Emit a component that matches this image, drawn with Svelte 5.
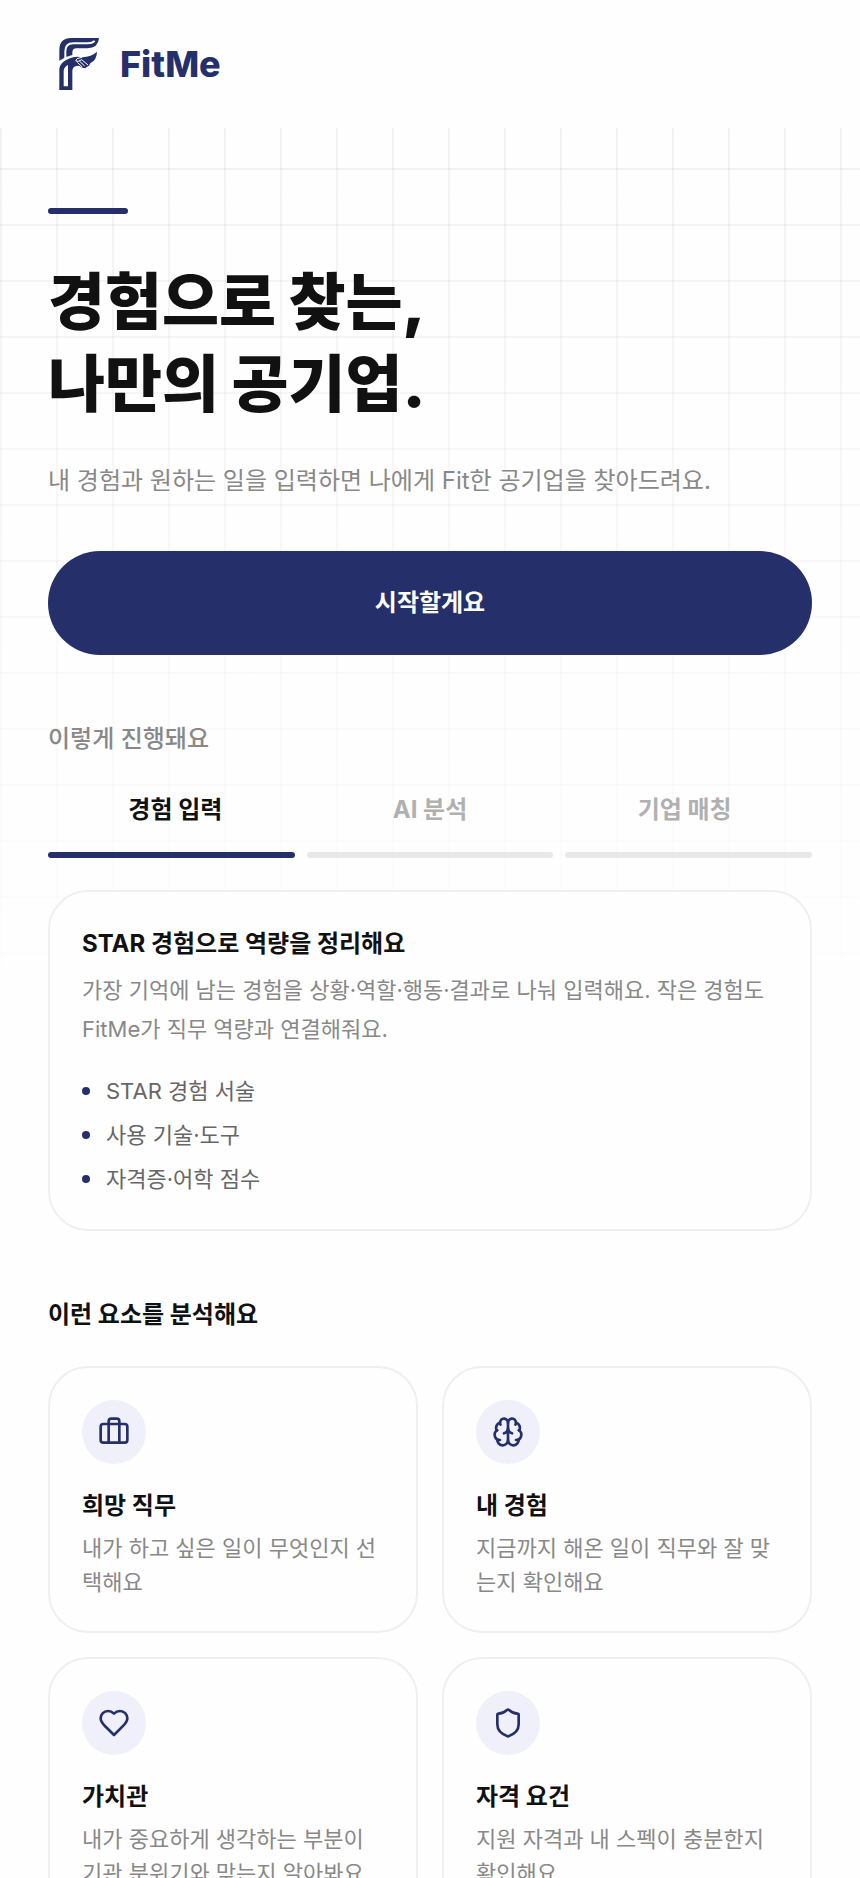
<script>
  const steps = [
    {
      tab: '경험 입력',
      title: 'STAR 경험으로 역량을 정리해요',
      text: '가장 기억에 남는 경험을 상황·역할·행동·결과로 나눠 입력해요. 작은 경험도 FitMe가 직무 역량과 연결해줘요.',
      points: ['STAR 경험 서술', '사용 기술·도구', '자격증·어학 점수'],
    },
    { tab: 'AI 분석' },
    { tab: '기업 매칭' },
  ];

  const factors = [
    {
      icon: 'briefcase',
      title: '희망 직무',
      text: '내가 하고 싶은 일이 무엇인지 선택해요',
    },
    {
      icon: 'brain',
      title: '내 경험',
      text: '지금까지 해온 일이 직무와 잘 맞는지 확인해요',
    },
    {
      icon: 'heart',
      title: '가치관',
      text: '내가 중요하게 생각하는 부분이 기관 분위기와 맞는지 알아봐요',
    },
    {
      icon: 'shield',
      title: '자격 요건',
      text: '지원 자격과 내 스펙이 충분한지 확인해요',
    },
  ];

  const current = steps[0];
</script>

<div class="page">
  <header>
    <a class="brand" href="#top">
      <svg class="logo" viewBox="54 36 192 192" aria-hidden="true">
        <path
          fill="#252f6a"
          d="M88 122V90Q88 54 124 54H207Q205 84 172 85H139Q127 85 127 98V105Q104 110 88 122Z"
        />
        <path
          fill="none"
          stroke="#fff"
          stroke-width="6"
          d="M106 117V94Q106 70 130 70H174Q186 70 194 63"
        />
        <path
          fill="#252f6a"
          d="M88 210V146Q91 126 116 116Q137 107 156 112Q185 110 201 95Q201 119 181 130L177 137L171 140L166 145L157 143L147 137Q127 137 127 153V210Z"
        />
        <path fill="#fff" d="M101 199V152Q102 141 114 135V199Z" />
        <path
          fill="none"
          stroke="#fff"
          stroke-width="3"
          stroke-linecap="round"
          stroke-linejoin="round"
          d="M156 112L141 116L137 123Q144 127 155 119L173 134M149 124L163 137M143 128L156 140"
        />
      </svg>
      <span>FitMe</span>
    </a>
  </header>

  <main id="top">
    <div class="accent"></div>
    <h1>경험으로 찾는,<br />나만의 공기업.</h1>
    <p class="lead">내 경험과 원하는 일을 입력하면 나에게 Fit한 공기업을 찾아드려요.</p>
    <button class="start" type="button">시작할게요</button>

    <section>
      <h2 class="muted">이렇게 진행돼요</h2>
      <div class="tabs" role="tablist">
        {#each steps as step, i}
          <button type="button" role="tab" aria-selected={i === 0} class:active={i === 0}>
            {step.tab}
          </button>
        {/each}
      </div>
      <div class="bars">
        {#each steps as _, i}
          <span class:active={i === 0}></span>
        {/each}
      </div>
      <article class="card">
        <h3>{current.title}</h3>
        <p class="detail">{current.text}</p>
        <ul>
          {#each current.points as point}
            <li>{point}</li>
          {/each}
        </ul>
      </article>
    </section>

    <section>
      <h2>이런 요소를 분석해요</h2>
      <div class="factors">
        {#each factors as factor}
          <article class="card">
            <div class="badge">
              <svg viewBox="0 0 24 24" aria-hidden="true">
                {#if factor.icon === 'briefcase'}
                  <path d="M16 20V4a2 2 0 0 0-2-2h-4a2 2 0 0 0-2 2v16" />
                  <rect width="20" height="14" x="2" y="6" rx="2" />
                {:else if factor.icon === 'brain'}
                  <path d="M12 18V5" />
                  <path d="M15 13a4.17 4.17 0 0 1-3-4 4.17 4.17 0 0 1-3 4" />
                  <path d="M17.598 6.5A3 3 0 1 0 12 5a3 3 0 1 0-5.598 1.5" />
                  <path d="M17.997 5.125a4 4 0 0 1 2.526 5.77" />
                  <path d="M18 18a4 4 0 0 0 2-7.464" />
                  <path d="M19.967 17.483A4 4 0 1 1 12 18a4 4 0 1 1-7.967-.517" />
                  <path d="M6 18a4 4 0 0 1-2-7.464" />
                  <path d="M6.003 5.125a4 4 0 0 0-2.526 5.77" />
                {:else if factor.icon === 'heart'}
                  <path
                    d="M19 14c1.49-1.46 3-3.21 3-5.5A5.5 5.5 0 0 0 16.5 3c-1.76 0-3 .5-4.5 2-1.5-1.5-2.74-2-4.5-2A5.5 5.5 0 0 0 2 8.5c0 2.3 1.5 4.05 3 5.5l7 7Z"
                  />
                {:else}
                  <path
                    d="M20 13c0 5-3.5 7.5-7.66 8.95a1 1 0 0 1-.67-.01C7.5 20.5 4 18 4 13V6a1 1 0 0 1 1-1c2 0 4.5-1.2 6.24-2.72a1.17 1.17 0 0 1 1.52 0C14.51 3.81 17 5 19 5a1 1 0 0 1 1 1z"
                  />
                {/if}
              </svg>
            </div>
            <h3>{factor.title}</h3>
            <p>{factor.text}</p>
          </article>
        {/each}
      </div>
    </section>
  </main>
</div>

<style>
  :global(body) {
    margin: 0;
    background: #fefefe;
  }

  .page {
    --navy: #252f6a;
    --ink: #111;
    --gray: #888;
    --grid: rgba(17, 17, 40, 0.06);
    height: 100vh;
    overflow: hidden;
    color: var(--ink);
    font-family: Inter, 'Noto Sans CJK KR', sans-serif;
    font-size: 24px;
    line-height: 40px;
    background:
      linear-gradient(to bottom, rgba(254, 254, 254, 0), #fefefe 1032px),
      linear-gradient(to right, var(--grid) 2px, transparent 2px) 0 0 / 56px 56px,
      linear-gradient(to bottom, var(--grid) 2px, transparent 2px) 0 0 / 56px 56px;
  }

  h1,
  h2,
  h3,
  p,
  ul {
    margin: 0;
    padding: 0;
  }

  button {
    border: 0;
    background: none;
    font: inherit;
    cursor: pointer;
  }

  header {
    padding: 32px 48px;
    background: #fefefe;
  }

  .brand {
    display: inline-flex;
    align-items: center;
    gap: 8px;
    color: var(--navy);
    font-size: 36px;
    font-weight: 800;
    text-decoration: none;
    vertical-align: top;
  }

  .logo {
    width: 64px;
    height: 64px;
  }

  main {
    padding: 80px 48px 64px;
  }

  .accent {
    width: 80px;
    height: 6px;
    border-radius: 3px;
    background: var(--navy);
  }

  h1 {
    margin-top: 48px;
    font-size: 62px;
    font-weight: 900;
    line-height: 82px;
  }

  .lead {
    margin-top: 35px;
    color: var(--gray);
  }

  .start {
    display: block;
    width: 100%;
    margin-top: 50px;
    padding: 32px;
    border-radius: 52px;
    background: var(--navy);
    color: #fff;
    font-weight: 700;
  }

  section {
    margin-top: 64px;
  }

  h2 {
    font-size: 24px;
    font-weight: 700;
  }

  h2.muted {
    color: var(--gray);
    font-weight: 500;
  }

  .tabs,
  .bars {
    display: grid;
    grid-template-columns: repeat(3, 1fr);
  }

  .tabs {
    margin-top: 31px;
  }

  .tabs button {
    padding: 0;
    color: #b0b0b0;
    font-weight: 700;
  }

  .tabs .active {
    color: var(--ink);
  }

  .bars {
    gap: 12px;
    margin: 22px 0 32px;
  }

  .bars span {
    height: 6px;
    border-radius: 3px;
    background: #e8e8e8;
  }

  .bars .active {
    background: var(--navy);
  }

  .card {
    padding: 32px;
    border: 2px solid #efefef;
    border-radius: 40px;
    background: #fefefe;
  }

  .card h3 {
    font-size: 24px;
    font-weight: 700;
  }

  .card p {
    margin-top: 7px;
    color: var(--gray);
    font-size: 22px;
    line-height: 34px;
  }

  .card .detail {
    line-height: 39px;
  }

  ul {
    display: grid;
    gap: 8px;
    margin-top: 24px;
    list-style: none;
    color: #666;
    font-size: 22px;
    line-height: 36px;
  }

  li {
    display: flex;
    align-items: center;
    gap: 16px;
  }

  li::before {
    content: '';
    width: 8px;
    height: 8px;
    border-radius: 50%;
    background: var(--navy);
  }

  .factors {
    display: grid;
    grid-template-columns: repeat(2, 1fr);
    gap: 24px;
    margin-top: 31px;
  }

  .factors h3 {
    margin-top: 24px;
    line-height: 36px;
  }

  .badge {
    display: grid;
    place-items: center;
    width: 64px;
    height: 64px;
    border-radius: 50%;
    background: #eff0f9;
  }

  .badge svg {
    width: 32px;
    height: 32px;
    fill: none;
    stroke: var(--navy);
    stroke-width: 2;
    stroke-linecap: round;
    stroke-linejoin: round;
  }
</style>
